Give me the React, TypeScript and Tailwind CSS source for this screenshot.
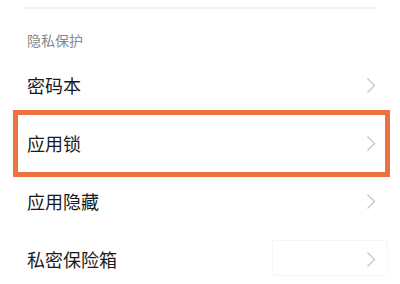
import React from 'react'

const cjk = { fontFamily: '"Noto Sans CJK SC", "Noto Sans", sans-serif' }

function Chevron() {
  return (
    <svg width="10" height="17" viewBox="0 0 10 17" className="shrink-0">
      <polyline points="1.5,1.5 8.5,8.5 1.5,15.5" fill="none" stroke="#c8c8c8" strokeWidth="1.4" />
    </svg>
  )
}

function Row({ label, children }: { label: string; children?: React.ReactNode }) {
  return (
    <div className="relative flex h-[58px] items-center justify-between pl-[27px] pr-[24px]">
      <span className="text-[18px] leading-[18px] text-[#1a1a1a]">{label}</span>
      <Chevron />
      {children}
    </div>
  )
}

export default function App() {
  return (
    <div className="h-[284px] w-[400px] overflow-hidden bg-white pt-[7px]" style={cjk}>
      <div className="mx-[23px] h-[2px] bg-[#f2f2f2]" />
      <div className="h-[47px] pl-[27px] pt-[24px] text-[14px] leading-[14px] text-[#888888]">隐私保护</div>
      <Row label="密码本" />
      <Row label="应用锁">
        <div className="pointer-events-none absolute left-[13px] right-[10px] top-[-4px] bottom-[-5px] border-[5px] border-[#ee7144]" />
      </Row>
      <Row label="应用隐藏" />
      <Row label="私密保险箱">
        <div className="pointer-events-none absolute left-[272px] top-[10px] h-[36px] w-[116px] border border-[#f6f6f6]" />
      </Row>
    </div>
  )
}
